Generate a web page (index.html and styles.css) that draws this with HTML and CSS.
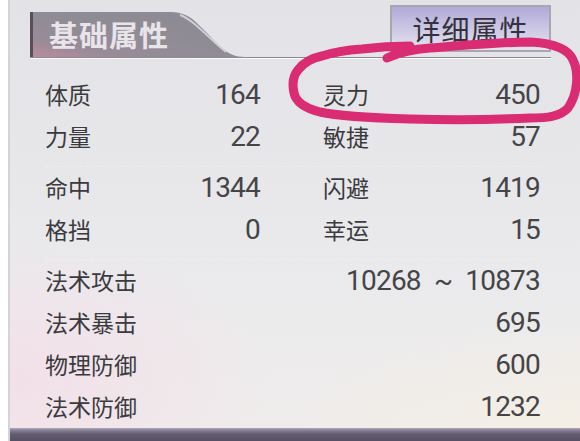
FILE: index.html
```html
<!DOCTYPE html>
<html lang="zh">
<head>
<meta charset="utf-8">
<title>基础属性</title>
<link rel="stylesheet" href="styles.css">
</head>
<body>
<div class="panel">
  <div class="header">
    <div class="tab">
      <svg class="tab-bg" width="215" height="45" viewBox="0 0 215 45">
        <defs>
          <linearGradient id="tg" x1="0" y1="1" x2="1" y2="0">
            <stop offset="0" stop-color="#bc8c9c"/>
            <stop offset="0.22" stop-color="#978b98"/>
            <stop offset="0.5" stop-color="#908c96"/>
            <stop offset="1" stop-color="#8d8993"/>
          </linearGradient>
        </defs>
        <path d="M0 0 H138 C156 0 162 6 172 16 C188 32 196 45 215 45 H0 Z" fill="url(#tg)"/>
        <path d="M150 3 C164 8 176 24 196 40" fill="none" stroke="#d2ced6" stroke-width="2"/>
        <rect x="0" y="0" width="3" height="45" fill="#5a4e5c"/>
      </svg>
      <span class="tab-text">基础属性</span>
    </div>
    <div class="btn">详细属性</div>
  </div>

  <div class="stats">
    <div class="grid">
      <div class="row"><span class="lbl">体质</span><span class="num">164</span></div>
      <div class="row"><span class="lbl">灵力</span><span class="num">450</span></div>
      <div class="row"><span class="lbl">力量</span><span class="num">22</span></div>
      <div class="row"><span class="lbl">敏捷</span><span class="num">57</span></div>
    </div>
    <div class="grid group">
      <div class="row"><span class="lbl">命中</span><span class="num">1344</span></div>
      <div class="row"><span class="lbl">闪避</span><span class="num">1419</span></div>
      <div class="row"><span class="lbl">格挡</span><span class="num">0</span></div>
      <div class="row"><span class="lbl">幸运</span><span class="num">15</span></div>
    </div>
    <div class="wide group">
      <div class="row"><span class="lbl">法术攻击</span><span class="num range">10268 ~ 10873</span></div>
      <div class="row"><span class="lbl">法术暴击</span><span class="num">695</span></div>
      <div class="row"><span class="lbl">物理防御</span><span class="num">600</span></div>
      <div class="row"><span class="lbl">法术防御</span><span class="num">1232</span></div>
    </div>
  </div>

  <div class="footer"></div>

  <svg class="mark" width="295" height="92" viewBox="0 0 295 92">
    <path d="M99 22 C112 16 126 13 142 12 C180 9 215 6 242 6 C262 7 280 12 285 24 C291 36 290 58 280 72 C272 81 258 82 242 82 C200 84 160 84 122 83 C85 82 50 80 32 76 C16 72 8 66 6 57 C4 48 5 40 10 34 C16 26 24 22 34 20 C46 16 60 14 74 13 C90 11 106 10 122 10"
      fill="none" stroke="#d92c72" stroke-width="9" stroke-linecap="round" stroke-linejoin="round"/>
  </svg>
</div>
</body>
</html>
```

FILE: styles.css
```css
html, body {
  margin: 0;
  padding: 0;
  width: 580px;
  height: 441px;
  overflow: hidden;
}

.panel {
  position: relative;
  height: 441px;
  box-sizing: border-box;
  margin-left: 8px;
  border-left: 2px solid #d3d3d9;
  display: flex;
  flex-direction: column;
  background:
    radial-gradient(ellipse 260px 140px at 0% 86%, rgba(244, 222, 232, 0.85), rgba(244, 222, 232, 0) 100%),
    radial-gradient(ellipse 300px 120px at 100% 100%, rgba(246, 240, 228, 0.9), rgba(246, 240, 228, 0) 100%),
    linear-gradient(to bottom, #e3e3e7 0%, #e8e8eb 45%, #ecebec 75%, #efeceb 100%);
  font-family: "Noto Sans CJK SC", "Noto Sans", sans-serif;
}

.header {
  margin-left: 20px;
  margin-right: 29px;
  height: 58px;
  box-sizing: border-box;
  display: flex;
  justify-content: space-between;
  align-items: flex-end;
  border-bottom: 1px solid #8e8a94;
  box-shadow: 0 1px 0 rgba(255, 255, 255, 0.8);
}

.tab {
  position: relative;
  width: 215px;
  height: 45px;
}

.tab-bg {
  position: absolute;
  left: 0;
  top: 0;
  display: block;
}

.tab-text {
  position: relative;
  display: block;
  padding-left: 19px;
  line-height: 44px;
  font-size: 29px;
  font-weight: 700;
  letter-spacing: 1px;
  color: #e9e4ea;
}

.btn {
  align-self: flex-start;
  margin-top: 5px;
  width: 161px;
  height: 47px;
  box-sizing: border-box;
  border: 2px solid #a8a6ae;
  background: linear-gradient(to bottom, #b1aad8 0%, #c9c4e4 45%, #e6e3ef 100%);
  display: flex;
  align-items: center;
  justify-content: center;
  font-size: 28px;
  line-height: 1;
  color: #34323a;
  letter-spacing: 1px;
}

.stats {
  flex: 1;
  padding: 16px 40px 0 35px;
}

.grid {
  display: grid;
  grid-template-columns: 215px 217px;
  column-gap: 63px;
}

.group {
  margin-top: 8px;
  border-top: 1px dashed rgba(255, 255, 255, 0.25);
}

.wide {
  display: flex;
  flex-direction: column;
}

.row {
  height: 42px;
  display: flex;
  align-items: center;
  justify-content: space-between;
}

.lbl {
  font-size: 23px;
  line-height: 1;
  color: #3b3b3f;
  position: relative;
  top: -1px;
}

.num {
  font-family: "Roboto", "Liberation Sans", sans-serif;
  font-size: 28px;
  font-weight: 400;
  line-height: 1;
  color: #454548;
  letter-spacing: -0.8px;
}

.range {
  word-spacing: 7px;
}

.footer {
  height: 13px;
  background: linear-gradient(to bottom, #b3abc2 0px, #8a8298 2px, #645c70 6px, #574f62 100%);
}

.mark {
  position: absolute;
  left: 278px;
  top: 36px;
  pointer-events: none;
}
```
